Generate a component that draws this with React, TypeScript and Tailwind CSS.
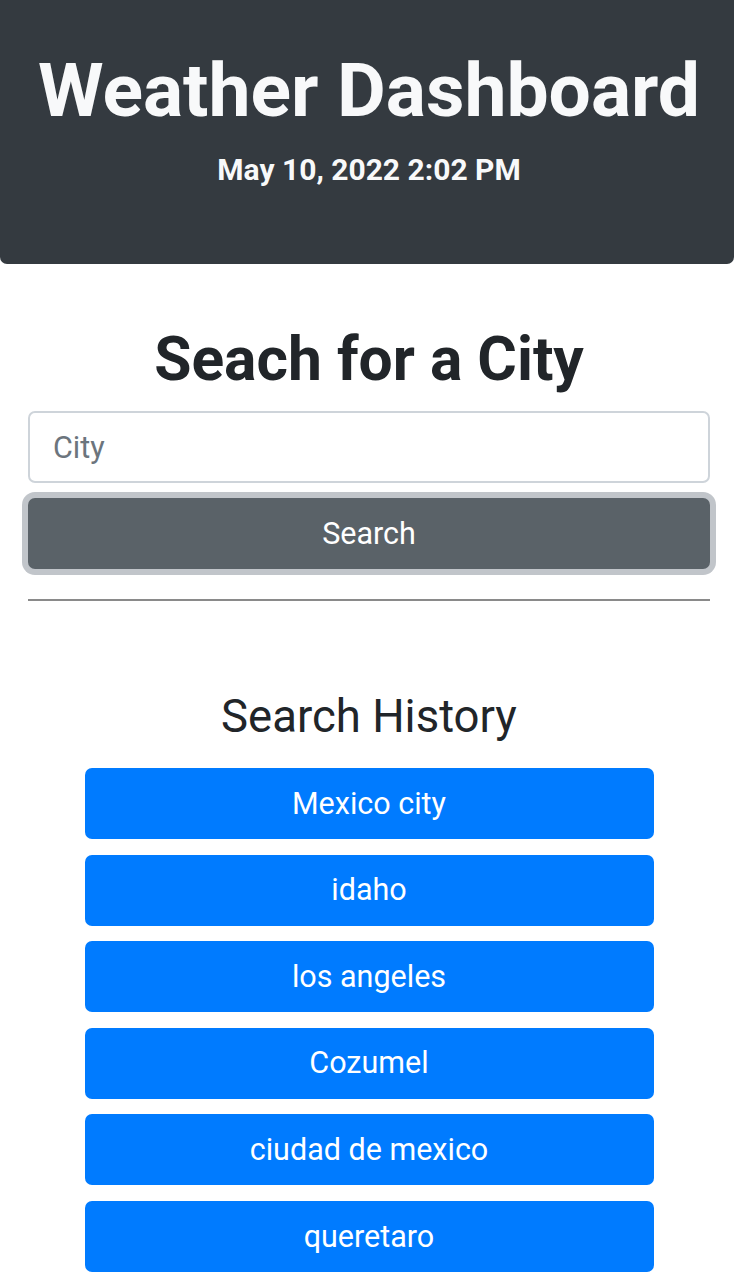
import React from "react";

const history = [
  "Mexico city",
  "idaho",
  "los angeles",
  "Cozumel",
  "ciudad de mexico",
  "queretaro",
];

export default function App() {
  return (
    <div className="min-h-screen bg-white font-['Roboto',sans-serif] text-[#212529]">
      {/* Header */}
      <header className="bg-[#343a40] rounded-b-[7px] h-[264px]">
        <div className="pl-[4px] pt-[46px] flex flex-col items-center">
          <h1 className="text-[#f8f9fa] font-bold text-[75px] leading-[88px]">
            Weather Dashboard
          </h1>
          <p className="text-[#f8f9fa] font-bold text-[30px] leading-[36px] mt-[18px]">
            May 10, 2022 2:02 PM
          </p>
        </div>
      </header>

      <div className="pl-[4px]">
        {/* Search */}
        <section className="px-[24px] pt-[60px]">
          <h2 className="text-center font-bold text-[60.5px] leading-[72px]">
            Seach for a City
          </h2>
          <input
            type="text"
            placeholder="City"
            className="mt-[15px] w-full h-[72px] border-2 border-[#ced4da] rounded-[7px] px-[23px] text-[30.5px] placeholder:text-[#6c757d] outline-none"
          />
          <button className="mt-[15px] w-full h-[71px] bg-[#5a6268] text-white text-[30.5px] rounded-[7px] ring-[6px] ring-[#c1c5ca]">
            Search
          </button>
          <hr className="mt-[30px] border-t-2 border-[#8a8a8a]" />
        </section>

        {/* History */}
        <section className="pt-[89px] flex flex-col items-center">
          <h3 className="text-[45.5px] leading-[54px] mb-[24px]">Search History</h3>
          <div className="w-[569px] flex flex-col gap-[15.6px] pb-[16px]">
            {history.map((city) => (
              <button
                key={city}
                className="h-[71px] w-full bg-[#007bff] text-white text-[30.5px] rounded-[7px]"
              >
                {city}
              </button>
            ))}
          </div>
        </section>
      </div>
    </div>
  );
}
